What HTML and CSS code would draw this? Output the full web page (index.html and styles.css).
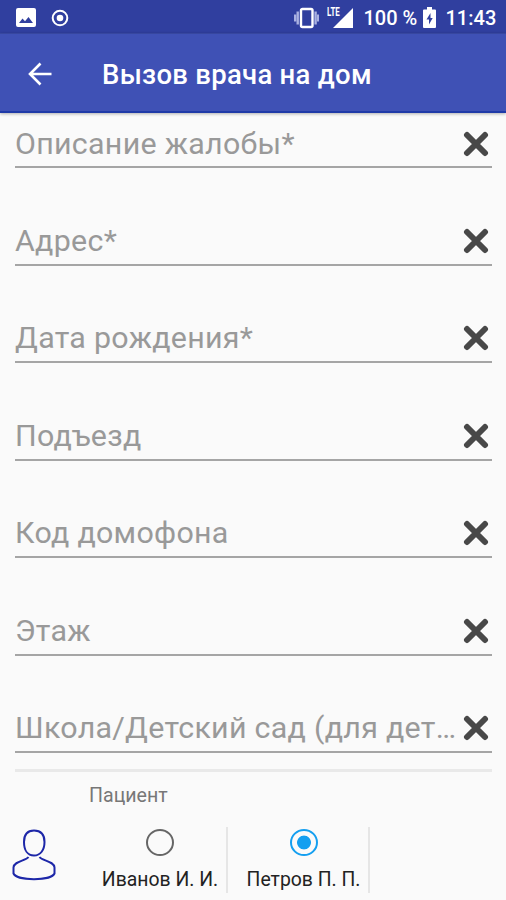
FILE: index.html
```
<!DOCTYPE html>
<html lang="ru">
<head>
<meta charset="utf-8">
<title>Вызов врача на дом</title>
<link rel="stylesheet" href="styles.css">
</head>
<body>
<svg class="defs" width="0" height="0">
  <symbol id="clear" viewBox="0 0 26 26"><path d="M4 4L22 22M22 4L4 22" fill="none" stroke="#484848" stroke-width="6" stroke-linecap="round"/></symbol>
</svg>
<header class="status">
  <svg class="picture" viewBox="0 0 20 20"><path fill="#fff" fill-rule="evenodd" d="M2 0H18Q20 0 20 2V17Q20 19 18 19H2Q0 19 0 17V2Q0 0 2 0ZM3 15H17L12.500 9L9 13.300L6.500 10.500Z"/></svg>
  <svg class="record" viewBox="0 0 18 18"><circle cx="9" cy="9" r="7.300" fill="none" stroke="#fff" stroke-width="2"/><circle cx="9" cy="9" r="3.300" fill="#fff"/></svg>
  <svg class="vibrate" viewBox="0 0 25 22"><rect x="7" y="2" width="11.500" height="18" rx="1.500" fill="none" stroke="#fff" stroke-width="2.400"/><path d="M3.700 4.500V17.500M21.600 4.500V17.500M1 7.500V14.500M24.200 7.500V14.500" stroke="#aab2e2" stroke-width="2.400" fill="none"/></svg>
  <span class="lte">LTE</span>
  <svg class="signal" viewBox="0 0 20 20"><path fill="#fff" d="M20 0V20H0Z"/></svg>
  <span class="charge">100 %</span>
  <svg class="battery" viewBox="0 0 13 21"><path fill="#fff" d="M4 0H9V2.500H12Q13 2.500 13 3.500V20Q13 21 12 21H1Q0 21 0 20V3.500Q0 2.500 1 2.500H4Z"/><path fill="#303f9f" d="M7.500 6L3.500 12.500H6V17.500L9.700 11H7.500Z"/></svg>
  <span class="clock">11:43</span>
</header>
<nav class="appbar">
  <svg class="back" viewBox="0 0 24 24"><path d="M23.500 12H2M12.500 1.500L2 12L12.500 22.500" fill="none" stroke="#fff" stroke-width="2.600"/></svg>
  <h1>Вызов врача на дом</h1>
</nav>
<main>
  <div class="field"><span class="hint">Описание жалобы*</span><svg class="clear"><use href="#clear"/></svg></div>
  <div class="field"><span class="hint">Адрес*</span><svg class="clear"><use href="#clear"/></svg></div>
  <div class="field"><span class="hint">Дата рождения*</span><svg class="clear"><use href="#clear"/></svg></div>
  <div class="field"><span class="hint">Подъезд</span><svg class="clear"><use href="#clear"/></svg></div>
  <div class="field"><span class="hint">Код домофона</span><svg class="clear"><use href="#clear"/></svg></div>
  <div class="field"><span class="hint">Этаж</span><svg class="clear"><use href="#clear"/></svg></div>
  <div class="field"><span class="hint">Школа/Детский сад (для дет…</span><svg class="clear"><use href="#clear"/></svg></div>
</main>
<footer>
  <div class="label">Пациент</div>
  <div class="patients">
    <svg class="person" viewBox="0 0 44 52"><g fill="none" stroke="#1d27a8" stroke-width="2"><path d="M22 1.500C15 1.500 12 5.500 12 13C12 21 15.500 26.500 22 26.500S32.500 21 32.500 13C32.500 5.500 29 1.500 22 1.500Z"/><path d="M16.500 28C13.500 32 2 32 1.500 38.500V44.500C5 52 39 52 42.500 44.500V38.500C42 32 30.500 32 27.500 28"/></g></svg>
    <label class="patient first"><span class="radio"></span><span class="name">Иванов И. И.</span></label>
    <label class="patient second"><span class="radio on"></span><span class="name">Петров П. П.</span></label>
  </div>
</footer>
</body>
</html>
```
FILE: styles.css
```
* { box-sizing: border-box; }
body {
  margin: 0;
  width: 506px;
  height: 900px;
  overflow: hidden;
  display: flex;
  flex-direction: column;
  background: #fafafa;
  font-family: Roboto, "Liberation Sans", sans-serif;
}
svg { display: block; flex: none; }
.defs { position: absolute; }
.status {
  flex: none;
  height: 33px;
  display: flex;
  align-items: center;
  padding: 2px 10.5px 0 16px;
  background: #303f9f;
  color: #fff;
  font-size: 20px;
  font-weight: 500;
  white-space: nowrap;
}
.picture { width: 20px; height: 20px; }
.record { width: 18px; height: 18px; margin-left: 15px; }
.vibrate { width: 25px; height: 22px; margin-left: auto; }
.lte {
  align-self: flex-start;
  width: 14px;
  margin: 4px 0 0 8px;
  font: 700 12px/12px Roboto, sans-serif;
  transform: scaleX(.66);
  transform-origin: left;
}
.signal { width: 20px; height: 20px; margin-left: -8px; }
.charge { margin-left: 11px; width: 53px; }
.battery { width: 13px; height: 21px; margin-left: 6px; }
.clock { width: 50px; margin-left: 10px; }
.appbar {
  flex: none;
  height: 80px;
  display: flex;
  align-items: center;
  padding-left: 28px;
  background: #3f51b5;
  border-top: 1px solid #37479f;
  border-bottom: 2px solid #1f3aa8;
  box-shadow: 0 1px 3px rgba(0, 0, 0, .3);
  color: #fff;
}
.back { width: 24px; height: 24px; margin-top: 2px; }
h1 {
  margin: 5px 0 0 50px;
  font-size: 27.5px;
  letter-spacing: .28px;
  line-height: 32px;
  font-weight: 500;
  white-space: nowrap;
}
main { flex: none; padding: 0 14px 0 15px; }
.field {
  height: 97.5px;
  display: flex;
  align-items: flex-end;
  padding-bottom: 1px;
  border-bottom: 2px solid #a5a5a5;
}
.field:first-child { height: 55px; padding-bottom: 0; }
.hint {
  flex: 1;
  min-width: 0;
  margin-bottom: 3px;
  white-space: nowrap;
  color: #999;
  font-size: 30.4px;
  letter-spacing: .28px;
  line-height: 38px;
}
.clear { width: 26px; height: 26px; margin: 0 3px 9px 0; }
footer { margin: 16px 14px 0 12px; }
.label {
  margin-left: 3px;
  padding: 11px 0 0 74px;
  border-top: 3px solid #e9e9e9;
  color: #777;
  font-size: 19.6px;
  line-height: 26px;
}
.patients { display: flex; height: 66px; margin-top: 18px; }
.person { width: 44px; height: 52px; margin-top: 2px; }
.patient {
  display: flex;
  flex-direction: column;
  align-items: center;
  border-right: 2px solid #e6e6e6;
}
.first { width: 136px; margin-left: 36px; padding-left: 2px; }
.second { width: 142px; padding-left: 11px; }
.radio {
  width: 28px;
  height: 28px;
  margin-top: 2px;
  border: 2px solid #666;
  border-radius: 50%;
}
.on {
  border-color: #149ff0;
  background: radial-gradient(circle, #149ff0 6.500px, transparent 7.300px);
}
.name {
  margin-top: 11px;
  color: #222;
  font-size: 19.4px;
  line-height: 26px;
  white-space: nowrap;
}
```
